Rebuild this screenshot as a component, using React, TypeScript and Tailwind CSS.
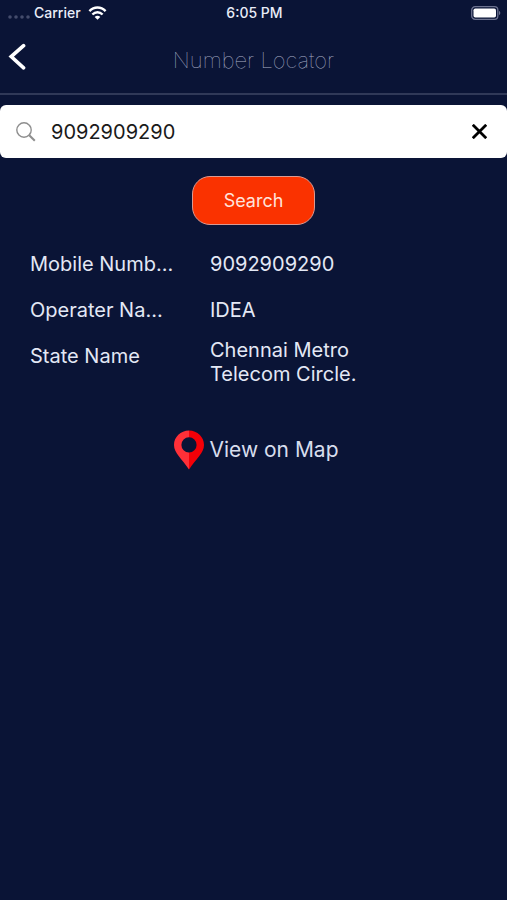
import { useState } from 'react';

const details = [
  { label: 'Mobile Numb...', value: '9092909290' },
  { label: 'Operater Na...', value: 'IDEA' },
  { label: 'State Name', value: 'Chennai Metro Telecom Circle.' },
];

function StatusBar() {
  return (
    <div className="grid grid-cols-3 items-center h-[26px] pl-2 pr-[6px] text-sm font-medium text-[#e9edf8]">
      <div className="flex items-center">
        <svg className="w-[22px] h-[14px] mr-1" viewBox="0 0 22 14" fill="#444c6c">
          <circle cx="2" cy="11" r="1.8" />
          <circle cx="8" cy="11" r="1.8" />
          <circle cx="14" cy="11" r="1.8" />
          <circle cx="20" cy="11" r="1.8" />
        </svg>
        <span>Carrier</span>
        <svg className="w-[19px] h-[14px] ml-[7px]" viewBox="0 0 18 14" fill="none" stroke="#ffffff" strokeWidth="2.4">
          <path d="M0.9 5.2C5.6 0.3 12.4 0.3 17.1 5.2" />
          <path d="M3.9 8.5C6.9 5.4 11.1 5.4 14.1 8.5" />
          <path d="M9 13.8L6.2 11C7.8 9.4 10.2 9.4 11.8 11Z" fill="#ffffff" stroke="none" />
        </svg>
      </div>
      <span className="text-center">6:05 PM</span>
      <svg className="w-[30px] h-[14px] justify-self-end" viewBox="0 0 30 14" fill="none">
        <rect x="0.7" y="0.7" width="26.1" height="12.6" rx="3.4" stroke="#6d7390" strokeWidth="1.3" />
        <rect x="2.5" y="2.4" width="22.5" height="9.2" rx="1.8" fill="#ffffff" />
        <path d="M28 5C29.7 5.5 29.7 8.5 28 9Z" fill="#6d7390" />
      </svg>
    </div>
  );
}

export default function App() {
  const [number, setNumber] = useState('9092909290');

  return (
    <div className="min-h-screen bg-[#0a1436] font-['Inter','Liberation_Sans',sans-serif]">
      <StatusBar />

      {/* Navigation bar */}
      <header className="grid grid-cols-[40px_1fr_40px] items-center h-[69px] border-b-2 border-[#303958]">
        <button type="button" aria-label="Back" className="pl-2 pb-[6px]">
          <svg className="w-[19px] h-[27px]" viewBox="0 0 19 27" fill="none" stroke="#ffffff" strokeWidth="3.6" strokeLinecap="round" strokeLinejoin="miter">
            <path d="M15.6 2.6L3.2 13.6L15.6 24.8" />
          </svg>
        </button>
        <h1 className="text-[22px] leading-7 font-thin text-center text-[#a9afc6]">Number Locator</h1>
      </header>

      <main className="pt-[10px]">
        {/* Search field */}
        <div className="flex items-center h-[53px] px-4 bg-white rounded-md">
          <svg className="w-[20px] h-[20px] shrink-0" viewBox="0 0 20 20" fill="none" stroke="#8e8e8e">
            <circle cx="8" cy="8" r="7.2" strokeWidth="1.4" />
            <path d="M13.2 13.2L18.8 18.8" strokeWidth="2" />
          </svg>
          <input
            type="text"
            aria-label="Mobile number"
            value={number}
            onChange={(e) => setNumber(e.target.value)}
            className="flex-1 min-w-0 ml-[15px] text-xl text-[#1a1a1a] bg-transparent outline-none"
          />
          <button type="button" aria-label="Clear" onClick={() => setNumber('')} className="p-1">
            <svg className="w-[15px] h-[15px]" viewBox="0 0 15 15" stroke="#000000" strokeWidth="2.8">
              <path d="M0.8 0.8L14.2 14.2M14.2 0.8L0.8 14.2" />
            </svg>
          </button>
        </div>

        <button
          type="button"
          className="block mx-auto mt-[18px] w-[123px] h-[49px] rounded-[18px] border border-[#d99a92] bg-[#fa3200] text-lg text-[#ffe3dc]"
        >
          Search
        </button>

        <dl className="mt-[15px] px-[30px] text-xl text-[#e3e8f5]">
          {details.map((item) => (
            <div key={item.label} className="grid grid-cols-[180px_160px] leading-6 min-h-[46px] pt-3">
              <dt>{item.label}</dt>
              <dd className={item.value.length > 14 ? '-mt-[6px]' : ''}>{item.value}</dd>
            </div>
          ))}
        </dl>

        <a href="#map" className="flex items-center gap-1 mt-11 pl-[5px] w-fit mx-auto text-[21px] text-[#d7dded]">
          <svg className="w-[32px] h-[40px]" viewBox="0 0 32 40">
            <path d="M16 0.5C7.6 0.5 1 7 1 15C1 23.5 9 28.5 16 39.5V22.5A7.6 7.6 0 0 1 16 7.3Z" fill="#ff3038" />
            <path d="M16 0.5C24.4 0.5 31 7 31 15C31 23.5 23 28.5 16 39.5V22.5A7.6 7.6 0 0 0 16 7.3Z" fill="#f40008" />
          </svg>
          View on Map
        </a>
      </main>
    </div>
  );
}
